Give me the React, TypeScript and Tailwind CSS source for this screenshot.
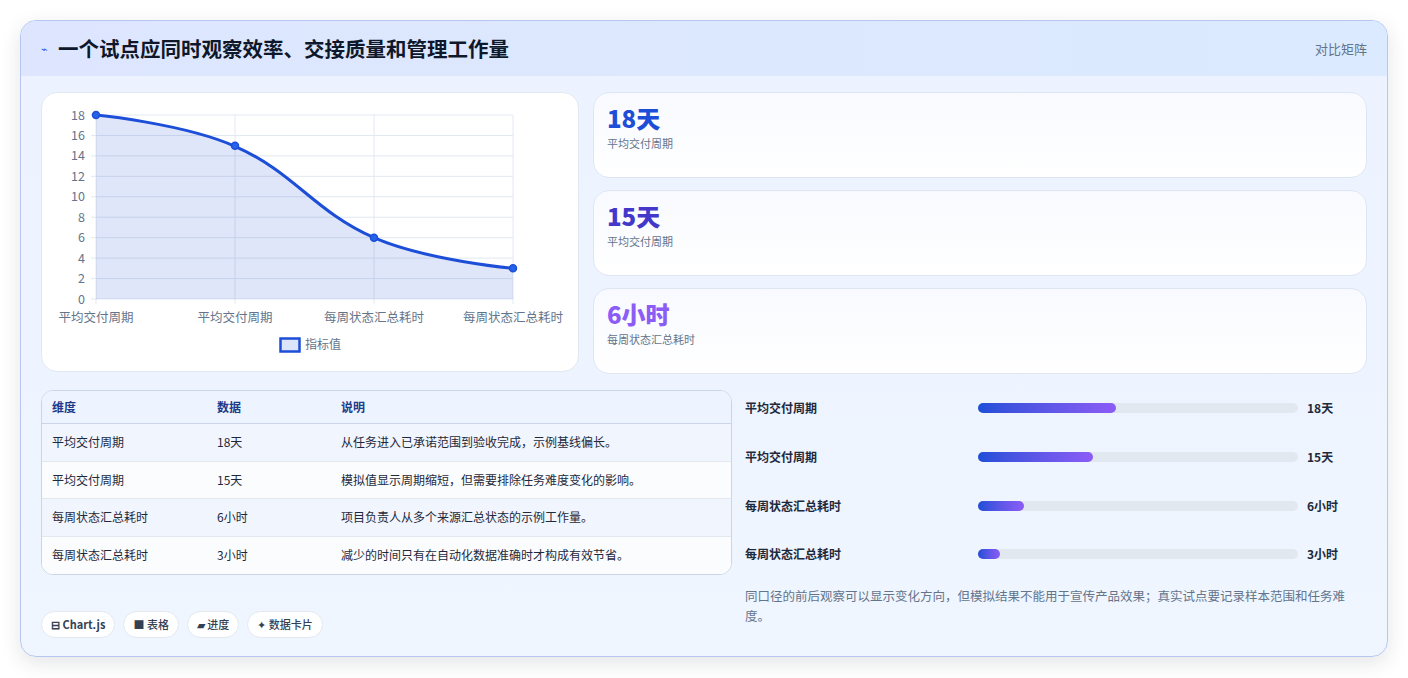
const font = { fontFamily: '"Noto Sans CJK SC", "Noto Sans", sans-serif' };

const stats = [
  { v: "18天", l: "平均交付周期", c: "text-[#1d4ed8]" },
  { v: "15天", l: "平均交付周期", c: "text-[#4338ca]" },
  { v: "6小时", l: "每周状态汇总耗时", c: "text-[#8b5cf6]" },
];

const rows = [
  ["平均交付周期", "18天", "从任务进入已承诺范围到验收完成，示例基线偏长。"],
  ["平均交付周期", "15天", "模拟值显示周期缩短，但需要排除任务难度变化的影响。"],
  ["每周状态汇总耗时", "6小时", "项目负责人从多个来源汇总状态的示例工作量。"],
  ["每周状态汇总耗时", "3小时", "减少的时间只有在自动化数据准确时才构成有效节省。"],
];

const bars = [
  { l: "平均交付周期", v: "18天", w: 43 },
  { l: "平均交付周期", v: "15天", w: 36 },
  { l: "每周状态汇总耗时", v: "6小时", w: 14.5 },
  { l: "每周状态汇总耗时", v: "3小时", w: 7 },
];

function Chart() {
  const xs = [54, 193, 332, 471];
  const ticks = [0, 2, 4, 6, 8, 10, 12, 14, 16, 18];
  const y = (v: number) => 206 - v * (184 / 18);
  const pts = [18, 15, 6, 3];
  const line = "M54,22 C54,22 141.6,30.6 193,53.3 C252.8,79.7 272.2,118.5 332,144.7 C383.4,167.3 471,175.3 471,175.3";
  const labels = ["平均交付周期", "平均交付周期", "每周状态汇总耗时", "每周状态汇总耗时"];
  return (
    <svg width="538" height="280" viewBox="0 0 538 280" style={font}>
      {ticks.map((t) => (
        <g key={t}>
          <line x1="49" x2="471" y1={y(t)} y2={y(t)} stroke="#e2e8f0" />
          <text x="43" y={y(t) + 4.5} fontSize="12.5" fill="#64748b" textAnchor="end">{t}</text>
        </g>
      ))}
      {xs.map((x) => (
        <line key={x} x1={x} x2={x} y1="22" y2="211" stroke="#e2e8f0" />
      ))}
      <path d={line + " L471,206 L54,206 Z"} fill="#1d4ed8" fillOpacity="0.14" />
      <path d={line} fill="none" stroke="#1d4ed8" strokeWidth="3" />
      {pts.map((p, i) => (
        <circle key={i} cx={xs[i]} cy={y(p)} r="3.5" fill="#2563eb" stroke="#1d4ed8" strokeWidth="1.5" />
      ))}
      {labels.map((l, i) => (
        <text key={i} x={xs[i]} y="229" fontSize="12.5" fill="#64748b" textAnchor="middle">{l}</text>
      ))}
      <rect x="238.5" y="245.5" width="19" height="13" fill="#dbe4fb" stroke="#1d4ed8" strokeWidth="2.5" />
      <text x="263" y="256" fontSize="12" fill="#64748b">指标值</text>
    </svg>
  );
}

export default function App() {
  return (
    <div className="min-h-[678px] bg-white p-5" style={font}>
      <div className="overflow-hidden rounded-2xl border border-[#b9c6f0] bg-gradient-to-b from-[#ecf2ff] to-[#eff6ff] shadow-[0_6px_20px_rgba(30,41,59,0.12)]">
        <div className="flex h-[55px] items-center justify-between bg-gradient-to-r from-[#dde6fe] to-[#dbeafe] pl-5 pr-5">
          <div className="flex items-center gap-2.5">
            <span className="text-[11px] text-[#2563eb]">⌁</span>
            <h1 className="text-[20.5px] font-bold text-[#0f172a]">一个试点应同时观察效率、交接质量和管理工作量</h1>
          </div>
          <span className="text-[13px] text-[#64748b]">对比矩阵</span>
        </div>
        <div className="px-5 pb-[18px] pt-4">
          <div className="grid grid-cols-[538px_1fr] gap-[14px]">
            <div className="h-[280px] rounded-2xl border border-[#e2e8f0] bg-white">
              <Chart />
            </div>
            <div className="flex flex-col gap-3">
              {stats.map((s, i) => (
                <div key={i} className="h-[86px] rounded-2xl border border-[#dfe6f3] bg-gradient-to-b from-[#f8faff] to-white px-[13px] pt-[9px]">
                  <div className={`text-[24px] font-extrabold leading-[32px] ${s.c}`}>{s.v}</div>
                  <div className="mt-[1px] text-[11px] text-[#64748b]">{s.l}</div>
                </div>
              ))}
            </div>
          </div>
          <div className="mt-4 grid grid-cols-[691px_1fr] gap-[13px]">
            <div>
              <div className="overflow-hidden rounded-xl border border-[#cbd5e8] bg-white">
                <div className="grid h-[33px] grid-cols-[165px_124px_1fr] items-center border-b border-[#cbd5e8] bg-[#eef4ff] px-[10px] text-[12px] font-semibold text-[#1e3a8a]">
                  <span>维度</span><span>数据</span><span>说明</span>
                </div>
                {rows.map((r, i) => (
                  <div key={i} className={`grid h-[37.5px] grid-cols-[165px_124px_1fr] items-center px-[10px] text-[12px] text-[#1e293b] ${i < 3 ? "border-b border-[#e2e8f0]" : ""} ${i % 2 === 0 ? "bg-[#f1f5fd]" : "bg-[#fbfcfe]"}`}>
                    <span>{r[0]}</span><span>{r[1]}</span><span>{r[2]}</span>
                  </div>
                ))}
              </div>
              <div className="mt-9 flex gap-2">
                {["⊟ Chart.js", "■ 表格", "▰ 进度", "✦ 数据卡片"].map((c, i) => (
                  <span key={i} className={`flex h-[27px] items-center rounded-full border border-[#e2e8f0] bg-white px-[9px] text-[11px] text-[#334155] ${i === 0 ? "font-bold" : "font-medium"}`}>{c}</span>
                ))}
              </div>
            </div>
            <div className="-mt-[6px]">
              <div className="flex flex-col">
                {bars.map((b, i) => (
                  <div key={i} className="flex h-[48.7px] items-center text-[12px] font-semibold text-[#1e293b]">
                    <span className="w-[233px]">{b.l}</span>
                    <div className="h-[10px] w-[320px] rounded-full bg-[#e2e8f0]">
                      <div className="h-full rounded-full bg-gradient-to-r from-[#1d4ed8] to-[#8b5cf6]" style={{ width: `${b.w}%` }} />
                    </div>
                    <span className="ml-[9px]">{b.v}</span>
                  </div>
                ))}
              </div>
              <p className="mt-[7px] text-[12.5px] leading-[20px] text-[#64748b]">同口径的前后观察可以显示变化方向，但模拟结果不能用于宣传产品效果；真实试点要记录样本范围和任务难度。</p>
            </div>
          </div>
        </div>
      </div>
    </div>
  );
}
